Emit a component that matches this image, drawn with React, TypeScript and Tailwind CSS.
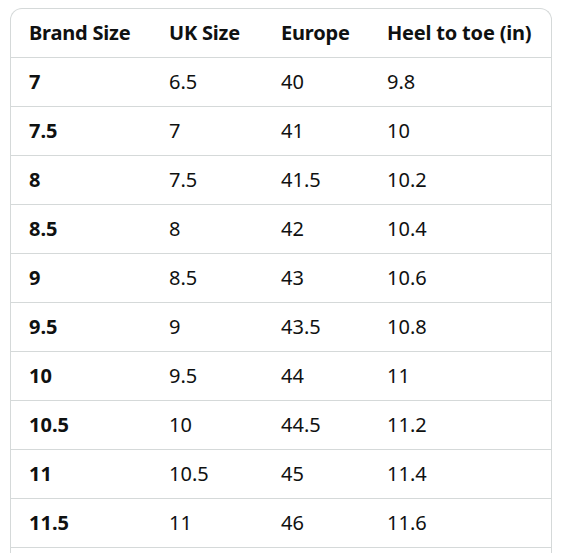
const HEADERS = ['Brand Size', 'UK Size', 'Europe', 'Heel to toe (in)']

const ROWS = [
  ['7', '6.5', '40', '9.8'],
  ['7.5', '7', '41', '10'],
  ['8', '7.5', '41.5', '10.2'],
  ['8.5', '8', '42', '10.4'],
  ['9', '8.5', '43', '10.6'],
  ['9.5', '9', '43.5', '10.8'],
  ['10', '9.5', '44', '11'],
  ['10.5', '10', '44.5', '11.2'],
  ['11', '10.5', '45', '11.4'],
  ['11.5', '11', '46', '11.6'],
]

const COLS = ['w-[140px]', 'w-[112px]', 'w-[106px]', 'w-auto']

export default function App() {
  return (
    <div
      className="h-[553px] overflow-hidden bg-white pl-[10px] pr-[10px] pt-[8px] text-[#0f1111]"
      style={{ fontFamily: '"Noto Sans", "Open Sans", sans-serif' }}
    >
      <div className="h-[600px] w-[542px] overflow-hidden rounded-t-[12px] border border-b-0 border-[#d5d9d9]">
        <table className="w-full table-fixed border-collapse text-[20px]">
          <colgroup>
            {COLS.map((c, i) => (
              <col key={i} className={c} />
            ))}
          </colgroup>
          <thead>
            <tr className="h-[48px] border-b border-[#d5d9d9]">
              {HEADERS.map((h) => (
                <th
                  key={h}
                  className="whitespace-nowrap px-[18px] text-left font-bold leading-none tracking-[-0.2px]"
                >
                  {h}
                </th>
              ))}
            </tr>
          </thead>
          <tbody>
            {ROWS.map((row) => (
              <tr key={row[0]} className="h-[49px] border-b border-[#d5d9d9]">
                {row.map((cell, i) => (
                  <td
                    key={i}
                    className={`whitespace-nowrap px-[18px] text-left leading-none ${i === 0 ? 'font-bold' : 'font-normal'}`}
                  >
                    {cell}
                  </td>
                ))}
              </tr>
            ))}
          </tbody>
        </table>
      </div>
    </div>
  )
}
